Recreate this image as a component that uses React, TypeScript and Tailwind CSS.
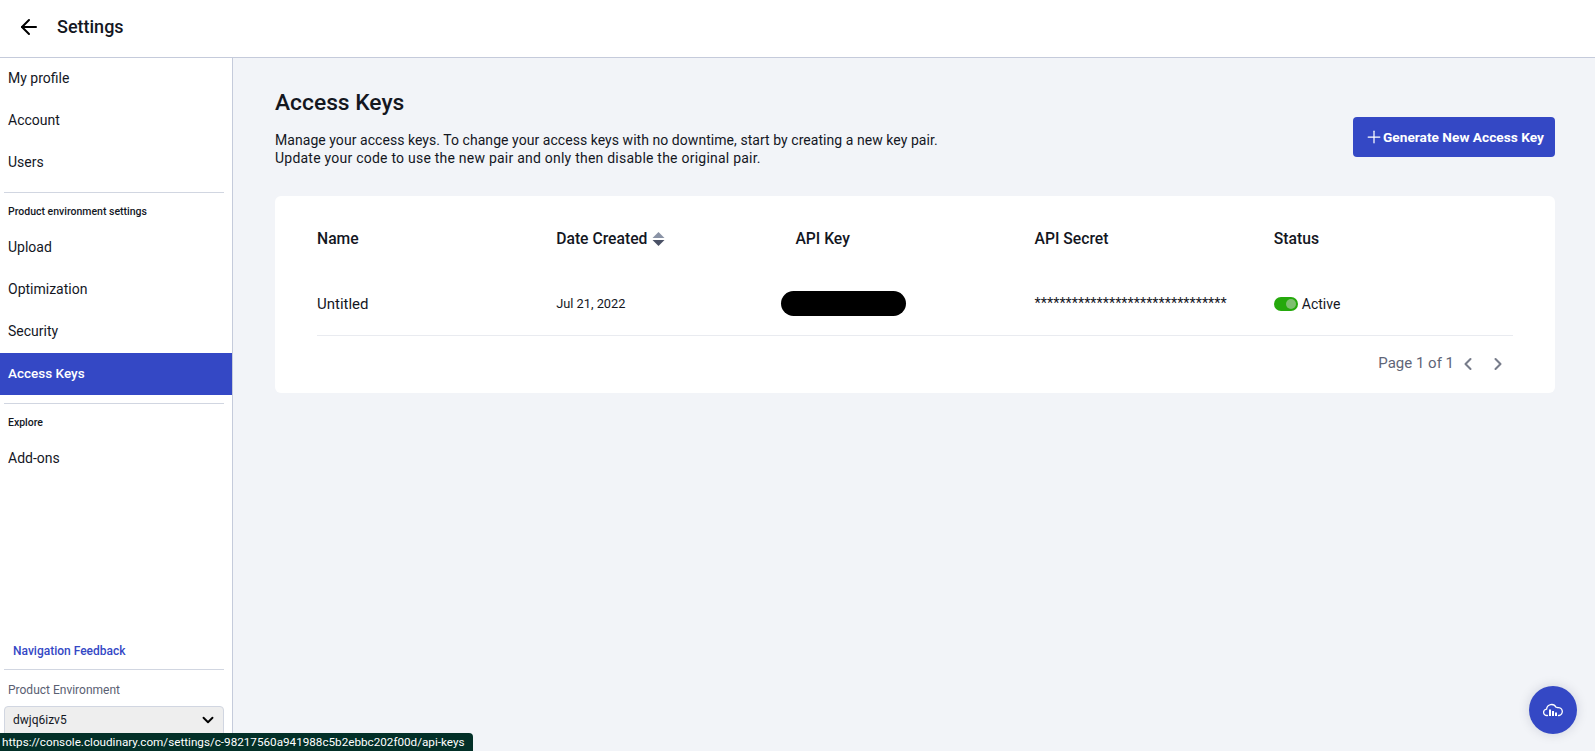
import { ArrowLeft, ChevronDown, ChevronLeft, ChevronRight, Plus } from 'lucide-react'

const font = "font-['Roboto','Noto_Sans',sans-serif]"

function NavItem({ label, active }: { label: string; active?: boolean }) {
  return (
    <div
      className={
        'h-[42px] flex items-center pl-2 pb-[2px] ' +
        (active ? 'bg-[#3448c5] text-white text-[13.5px] font-medium' : 'text-[14px] text-[#14171f]')
      }
    >
      {label}
    </div>
  )
}

function SectionLabel({ label }: { label: string }) {
  return <div className="h-[38px] pl-2 pt-[11px] text-[10.5px] font-medium leading-[16px] text-[#14171f]">{label}</div>
}

function CloudIcon() {
  return (
    <svg width="20" height="14" viewBox="0 0 20 14" fill="none">
      <path
        d="M4.5 12.5H4A3.2 3.2 0 0 1 3.6 6.1 5 5 0 0 1 13 4.2 3 3 0 0 1 14.6 4.6 3.2 3.2 0 0 1 16 12.5H15.5"
        stroke="white"
        strokeWidth="1.3"
        strokeLinecap="round"
      />
      <rect x="6" y="6.5" width="2" height="6.5" fill="white" />
      <rect x="9" y="8" width="2" height="5" fill="white" />
      <rect x="12" y="9.5" width="2" height="3.5" fill="white" />
    </svg>
  )
}

export default function App() {
  return (
    <div className={'relative h-[751px] w-[1595px] overflow-hidden bg-[#f2f4f8] flex flex-col ' + font}>
      <header className="h-[58px] shrink-0 bg-white border-b border-[#c5cbdb] flex items-center pl-[17px] pb-1">
        <ArrowLeft className="h-6 w-6 text-black" strokeWidth={2} />
        <h1 className="ml-4 text-[18px] font-medium text-[#14171f]">Settings</h1>
      </header>

      <div className="flex flex-1 min-h-0">
        <aside className="w-[233px] shrink-0 bg-white border-r border-[#c5cbdb] flex flex-col">
          <NavItem label="My profile" />
          <NavItem label="Account" />
          <NavItem label="Users" />
          <div className="ml-1 mr-2 mt-2 h-px bg-[#d1d6e1]" />
          <SectionLabel label="Product environment settings" />
          <div className="-mt-1">
            <NavItem label="Upload" />
            <NavItem label="Optimization" />
            <NavItem label="Security" />
            <NavItem label="Access Keys" active />
          </div>
          <div className="ml-1 mr-2 mt-2 h-px bg-[#d1d6e1]" />
          <SectionLabel label="Explore" />
          <div className="-mt-1">
            <NavItem label="Add-ons" />
          </div>

          <div className="mt-auto">
            <div className="pl-[13px] text-[12px] font-medium leading-[16px] text-[#3448c5]">Navigation Feedback</div>
            <div className="ml-1 mr-2 mt-[10px] h-px bg-[#d1d6e1]" />
            <div className="pl-2 mt-3 text-[12px] leading-[16px] text-[#5a6072]">Product Environment</div>
            <div className="ml-1 mr-2 mt-2 mb-3 h-[33px] rounded border border-[#d1d6e1] bg-[#eeeeee] flex items-center justify-between pl-2 pr-[6px] pb-[6px] text-[12px] text-[#14171f]">
              <span>dwjq6izv5</span>
              <ChevronDown className="h-[18px] w-[18px] text-black" strokeWidth={2.5} />
            </div>
          </div>
        </aside>

        <main className="flex-1 min-w-0 pl-[42px] pr-10">
          <div className="flex items-start justify-between pt-[31px]">
            <div>
              <h2 className="text-[22.8px] font-medium leading-[28px] text-[#14171f]">Access Keys</h2>
              <p className="mt-[14px] text-[14px] leading-[18px] text-[#14171f]">
                <span className="tracking-[0.05px]">
                  Manage your access keys. To change your access keys with no downtime, start by creating a new key pair.
                </span>
                <br />
                <span className="tracking-[0.23px]">
                  Update your code to use the new pair and only then disable the original pair.
                </span>
              </p>
            </div>
            <button className="mt-7 h-10 w-[202px] rounded bg-[#3448c5] text-white text-[13.7px] font-bold flex items-center pl-[11px]">
              <Plus className="h-5 w-5 -mr-px" strokeWidth={1.5} />
              Generate New Access Key
            </button>
          </div>

          <section className="mt-[29px] h-[197px] rounded-md bg-white px-[42px]">
            <div className="grid grid-cols-5 h-[85px] items-center pt-px text-[15.7px] font-medium text-[#14171f]">
              <div>Name</div>
              <div className="flex items-center gap-[5px]">
                Date Created
                <svg width="13" height="16" viewBox="0 0 13 16">
                  <path d="M6.5 1 12.5 7H.5z" fill="#8a93a6" />
                  <path d="M6.5 15 .5 9h12z" fill="#4a5166" />
                </svg>
              </div>
              <div>API Key</div>
              <div>API Secret</div>
              <div>Status</div>
            </div>
            <div className="grid grid-cols-5 h-[55px] items-start border-b border-[#e9ebf0] text-[14px] text-[#14171f]">
              <div className="leading-[46px] text-[15px]">Untitled</div>
              <div className="leading-[46px] text-[12.8px]">Jul 21, 2022</div>
              <div className="pt-[10px]">
                <div className="-ml-[14px] h-[25px] w-[125px] rounded-full bg-black" />
              </div>
              <div className="leading-[46px] text-[14.4px]">*******************************</div>
              <div className="flex items-center h-[46px] gap-1">
                <div className="relative h-[14px] w-6 rounded-full bg-[#25a90c]">
                  <div className="absolute right-[2px] top-[2px] h-[10px] w-[10px] rounded-full bg-[#7ebf70]" />
                </div>
                Active
              </div>
            </div>
            <div className="flex items-center justify-end h-[57px] pb-[2px] text-[#5f6577]">
              <span className="text-[15px]">Page 1 of 1</span>
              <ChevronLeft className="ml-1 h-5 w-5 text-[#777c8a]" strokeWidth={2.5} />
              <ChevronRight className="ml-[10px] mr-[5px] h-5 w-5 text-[#777c8a]" strokeWidth={2.5} />
            </div>
          </section>
        </main>
      </div>

      {/* browser link preview */}
      <div className="absolute left-0 bottom-0 h-[18px] w-[473px] rounded-tr-sm bg-[#033028] pl-[2px] text-[11.7px] leading-[18px] text-white whitespace-nowrap">
        https://console.cloudinary.com/settings/c-98217560a941988c5b2ebbc202f00d/api-keys
      </div>

      {/* help button */}
      <div className="absolute left-[1529px] top-[686px] h-12 w-12 rounded-full bg-[#3448c5] shadow-[0_0_12px_rgba(12,22,59,0.15)] flex items-center justify-center">
        <CloudIcon />
      </div>
    </div>
  )
}
